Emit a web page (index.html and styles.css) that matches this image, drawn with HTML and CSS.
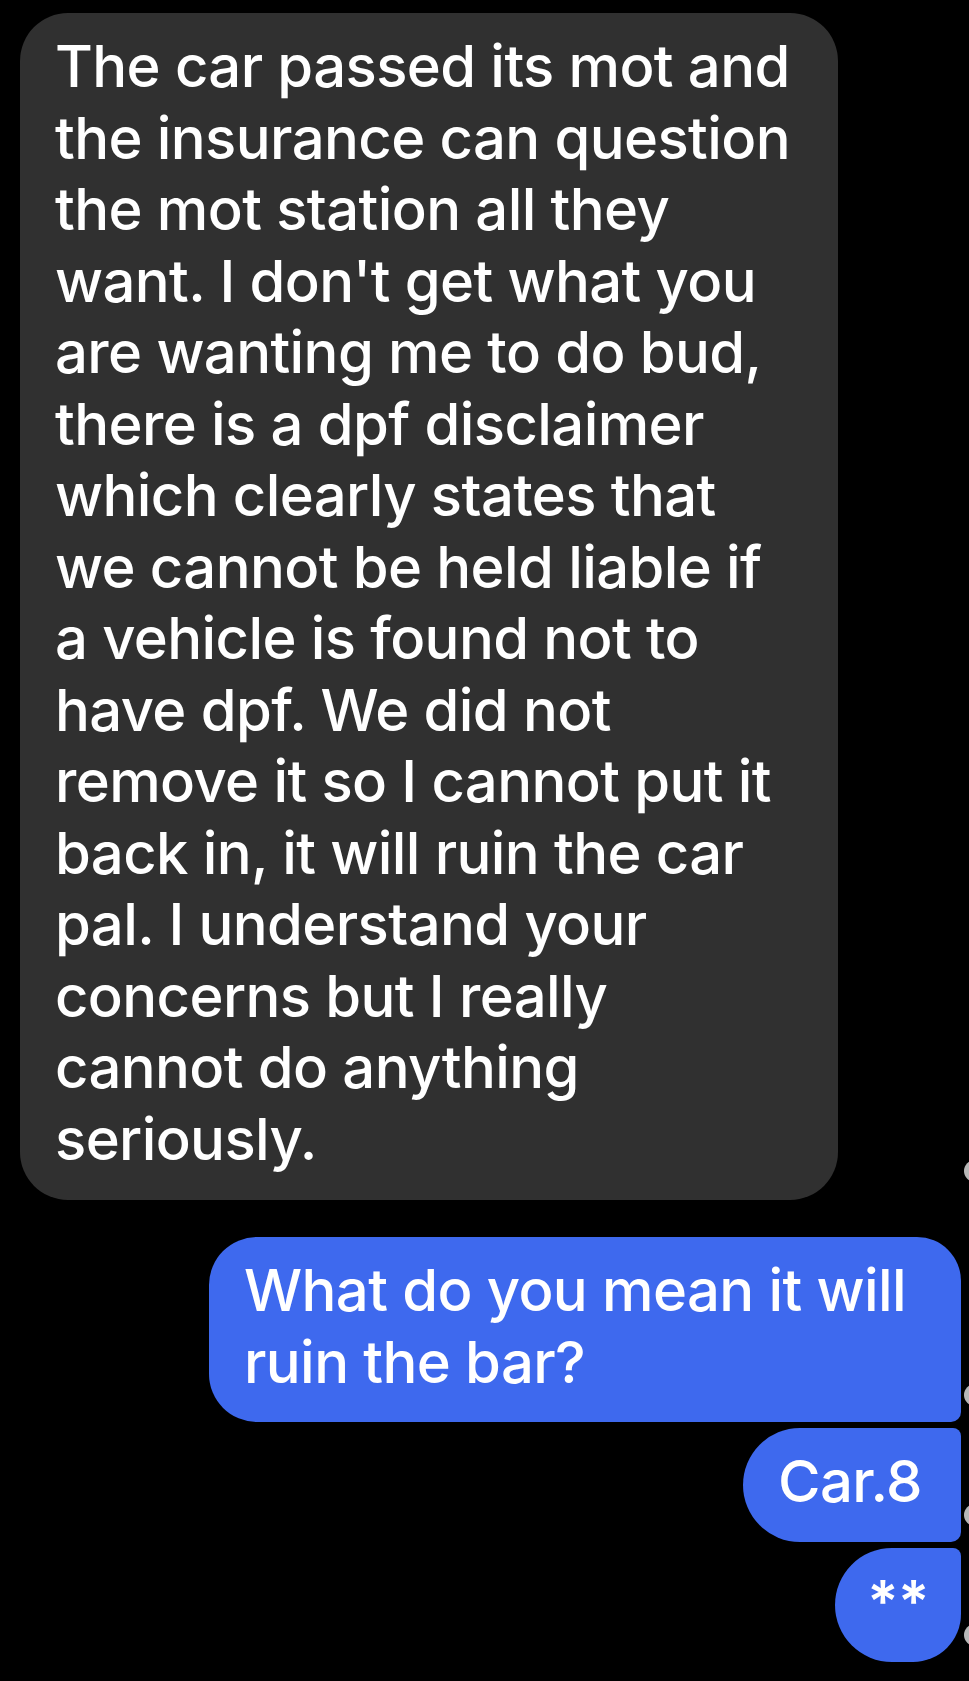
FILE: index.html
```html
<!DOCTYPE html>
<html lang="en">
<head>
<meta charset="utf-8">
<title>Messages</title>
<link rel="stylesheet" href="styles.css">
</head>
<body>
<div class="thread">
  <div class="row row-in">
    <div class="bubble bubble-in">The car passed its mot and<br>the insurance can question<br>the mot station all they<br>want. I don't get what you<br>are wanting me to do bud,<br>there is a dpf disclaimer<br>which clearly states that<br>we cannot be held liable if<br>a vehicle is found not to<br>have dpf. We did not<br>remove it so I cannot put it<br>back in, it will ruin the car<br>pal. I understand your<br>concerns but I really<br>cannot do anything<br>seriously.</div>
    <span class="mark"></span>
  </div>
  <div class="row row-out first">
    <div class="bubble bubble-out out-top">What do you mean it will<br>ruin the bar?</div>
    <span class="mark"></span>
  </div>
  <div class="row row-out">
    <div class="bubble bubble-out out-mid">Car.8</div>
    <span class="mark"></span>
  </div>
  <div class="row row-out">
    <div class="bubble bubble-out out-last">**</div>
    <span class="mark"></span>
  </div>
</div>
</body>
</html>
```
FILE: styles.css
```css
html, body {
  margin: 0;
  padding: 0;
  background: #000;
  overflow: hidden;
}
body {
  width: 969px;
  height: 1681px;
  font-family: Inter, "Noto Sans", sans-serif;
  color: #fff;
}
.thread {
  display: flex;
  flex-direction: column;
  padding-top: 13px;
  gap: 6px;
}
.row {
  display: flex;
  align-items: flex-end;
  position: relative;
}
.row-in {
  justify-content: flex-start;
  padding-left: 20px;
}
.row-out {
  justify-content: flex-end;
  padding-right: 8px;
}
.row-out.first {
  margin-top: 31px;
}
.bubble {
  font-size: 58px;
  font-weight: 500;
  line-height: 71.5px;
  letter-spacing: -0.6px;
  white-space: nowrap;
  box-sizing: border-box;
}
.bubble-in {
  background: #303030;
  width: 818px;
  padding: 18px 20px 25px 35px;
  border-radius: 48px;
}
.bubble-out {
  background: #3e69ee;
  padding: 18px 39px 24px 35px;
}
.out-top {
  width: 752px;
  border-radius: 48px 44px 10px 48px;
}
.out-mid {
  height: 114px;
  border-radius: 57px 8px 10px 57px;
}
.out-last {
  height: 114px;
  width: 126px;
  text-align: center;
  padding-left: 0;
  padding-right: 0;
  font-weight: 600;
  border-radius: 57px 8px 48px 57px;
}
.mark {
  position: absolute;
  right: -17px;
  bottom: 16px;
  width: 22px;
  height: 22px;
  border-radius: 50%;
  background: #b8b8b8;
}
.row-in .mark {
  bottom: 18px;
}
```
